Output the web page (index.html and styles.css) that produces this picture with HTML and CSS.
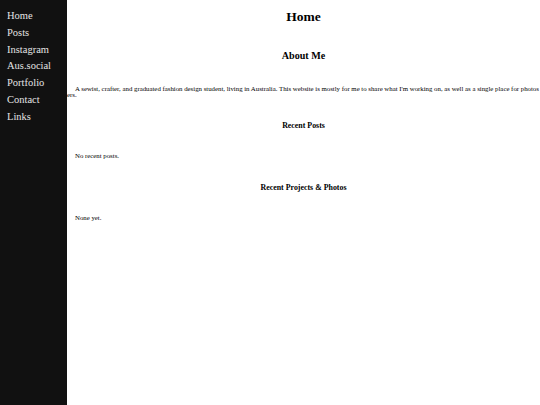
FILE: index.html
```html
<!DOCTYPE html>
<html lang="en">
<head>
<meta charset="utf-8">
<title>Home</title>
<link rel="stylesheet" href="styles.css">
</head>
<body>
<nav class="sidebar">
  <a href="#">Home</a>
  <a href="#">Posts</a>
  <a href="#">Instagram</a>
  <a href="#">Aus.social</a>
  <a href="#">Portfolio</a>
  <a href="#">Contact</a>
  <a href="#">Links</a>
</nav>
<main class="content">
  <h1 class="title">Home</h1>
  <h2 class="section-title">About Me</h2>
  <p class="about">A sewist, crafter, and graduated fashion design student, living in Australia. This website is mostly for me to share what I'm working on, as well as a single place for photos of my projects and others.</p>
  <h3 class="sub-title sub-first">Recent Posts</h3>
  <p class="note">No recent posts.</p>
  <h3 class="sub-title">Recent Projects &amp; Photos</h3>
  <p class="note">None yet.</p>
</main>
</body>
</html>
```
FILE: styles.css
```css
html, body {
  margin: 0;
  padding: 0;
  background: #fff;
}
body {
  display: flex;
  min-height: 100vh;
  font-family: "Liberation Serif", "Times New Roman", serif;
  color: #000;
}
.sidebar {
  width: 67px;
  flex: none;
  background: #111;
  display: flex;
  flex-direction: column;
  padding: 8px 0 0 7px;
  box-sizing: border-box;
}
.sidebar a {
  color: #e4e4e4;
  text-decoration: none;
  font-size: 10.5px;
  line-height: 16.8px;
}
.content {
  flex: 1;
  min-width: 0;
  overflow: hidden;
  padding-top: 8.5px;
}
.title {
  margin: 0;
  text-align: center;
  font-size: 13.5px;
  line-height: 16px;
}
.section-title {
  margin: 25.2px 0 0;
  text-align: center;
  font-size: 10.1px;
  line-height: 12px;
}
.about {
  margin: 23.9px 0 0 -61.2px;
  text-indent: 69.2px;
  font-size: 6.8px;
  line-height: 6.5px;
}
.sub-title {
  margin: 23.1px 0 0;
  text-align: center;
  font-size: 7.9px;
  line-height: 9px;
}
.sub-first {
  margin-top: 22.9px;
}
.note {
  margin: 21.6px 0 0 8px;
  font-size: 6.8px;
  line-height: 8px;
}
```
